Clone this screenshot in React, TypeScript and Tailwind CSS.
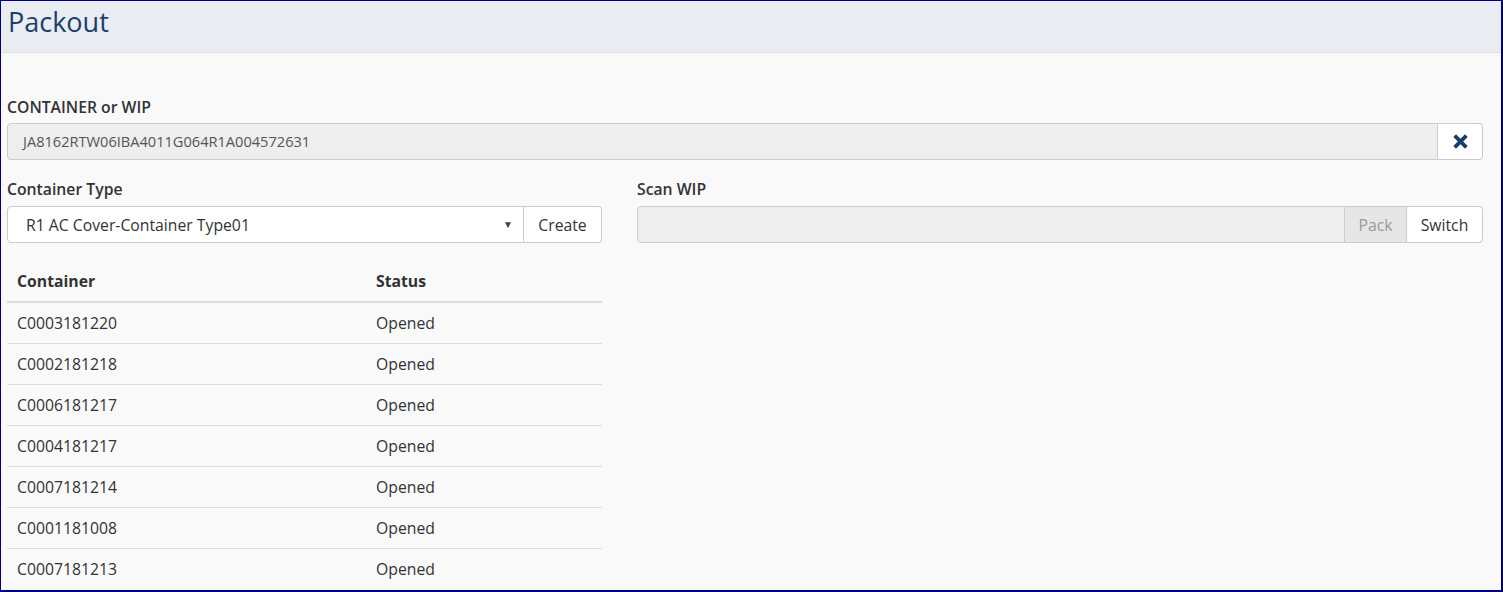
import React from 'react';

const rows = [
  'C0003181220',
  'C0002181218',
  'C0006181217',
  'C0004181217',
  'C0007181214',
  'C0001181008',
  'C0007181213',
];

const ClearIcon: React.FC = () => (
  <svg width="17" height="17" viewBox="0 0 16 16" aria-hidden="true">
    <path d="M2.5 2.5 L13.5 13.5 M13.5 2.5 L2.5 13.5" stroke="#173f6b" strokeWidth="3.6" strokeLinecap="butt" />
  </svg>
);

export default function App() {
  return (
    <div
      className="w-[1503px] h-[592px] overflow-hidden bg-[#f9f9f9] border-t border-l border-r-2 border-b-2 border-[#00007f] text-[15.75px] text-[#333]"
      style={{ fontFamily: '"Open Sans", "Liberation Sans", sans-serif' }}
    >
      <div className="h-[52px] bg-[#e9ecf0] border-b border-[#dde1e6] px-[7px] flex items-center">
        <h1 className="text-[27px] leading-none text-[#1b3f6b] -mt-[10px]">Packout</h1>
      </div>

      <div className="pl-[6px] pr-[18px] pt-[43px]">
        <label className="block font-semibold leading-[22px] mb-[5px]">CONTAINER or WIP</label>
        <div className="flex h-[37px]">
          <div className="flex-1 flex items-center bg-[#eeeeee] border border-[#cccccc] rounded-l-[4px] pl-[15px] text-[14.6px] text-[#555]">
            JA8162RTW06IBA4011G064R1A004572631
          </div>
          <button className="w-[45px] flex items-center justify-center bg-white border border-l-0 border-[#cccccc] rounded-r-[4px]">
            <ClearIcon />
          </button>
        </div>

        <div className="flex mt-[18px]">
          <div className="w-[595px]">
            <label className="block font-semibold leading-[22px] mb-[6px]">Container Type</label>
            <div className="flex h-[37px]">
              <div className="flex-1 flex items-center justify-between bg-white border border-[#cccccc] rounded-l-[4px] pl-[18px] pr-[10px] pt-[3px] text-[#333]">
                <span>R1 AC Cover-Container Type01</span>
                <span className="text-[10px] text-[#444] -mt-[3px]">▼</span>
              </div>
              <button className="w-[78px] bg-white border border-l-0 border-[#cccccc] rounded-r-[4px] pt-[2px] text-[#333]">
                Create
              </button>
            </div>

            <table className="w-full mt-[18px] border-collapse">
              <thead>
                <tr className="border-b-2 border-[#dddddd]">
                  <th className="text-left font-bold px-[10px] py-[9px] leading-[22px] w-[369px]">Container</th>
                  <th className="text-left font-bold py-[9px] leading-[22px]">Status</th>
                </tr>
              </thead>
              <tbody>
                {rows.map((id, i) => (
                  <tr key={id} className={i > 0 ? 'border-t border-[#dddddd]' : ''}>
                    <td className="px-[10px] py-[9px] leading-[22px]">{id}</td>
                    <td className="py-[9px] leading-[22px]">Opened</td>
                  </tr>
                ))}
              </tbody>
            </table>
          </div>

          <div className="flex-1 ml-[35px]">
            <label className="block font-semibold leading-[22px] mb-[6px]">Scan WIP</label>
            <div className="flex h-[37px]">
              <div className="flex-1 bg-[#eeeeee] border border-[#cccccc] rounded-l-[4px]" />
              <button className="w-[62px] bg-[#e6e6e6] border border-l-0 border-[#cccccc] pt-[2px] text-[#999]">Pack</button>
              <button className="w-[76px] bg-white border border-l-0 border-[#cccccc] rounded-r-[4px] pt-[2px] text-[#333]">
                Switch
              </button>
            </div>
          </div>
        </div>
      </div>
    </div>
  );
}
